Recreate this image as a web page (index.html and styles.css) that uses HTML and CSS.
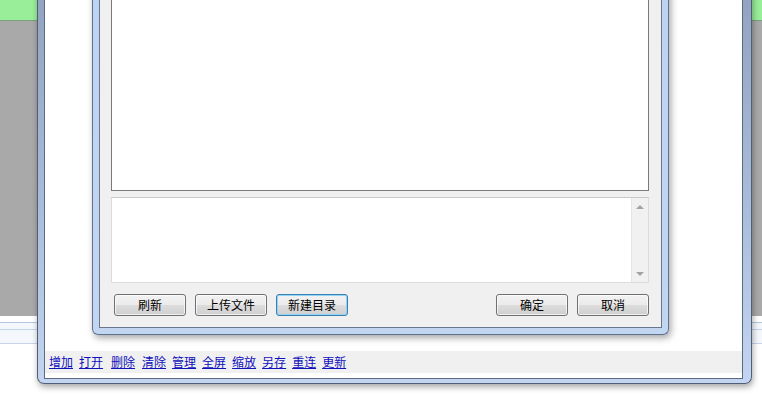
FILE: index.html
```html
<!DOCTYPE html>
<html lang="zh-CN">
<head>
  <meta charset="UTF-8" />
  <meta name="viewport" content="width=device-width, initial-scale=1.0" />
  <title>文件管理</title>
  <link rel="stylesheet" href="styles.css">
</head>
<body>
  <div class="desk">
    <div class="band"></div>
    <div class="shade"></div>
    <div class="strip"><div class="strip-line"></div></div>
  </div>

  <div class="win">
    <div class="win-body">
      <div class="links">
        <a href="#">增加</a>
        <a href="#" class="wide">打开</a>
        <a href="#" class="wide-s">删除</a>
        <a href="#">清除</a>
        <a href="#">管理</a>
        <a href="#">全屏</a>
        <a href="#">缩放</a>
        <a href="#">另存</a>
        <a href="#">重连</a>
        <a href="#">更新</a>
      </div>
    </div>
  </div>

  <div class="dlg">
    <div class="dlg-body">
      <div class="list"></div>
      <div class="memo">
        <div class="memo-text"></div>
        <div class="vbar">
          <span class="arr"><i class="tri up"></i></span>
          <span class="track"></span>
          <span class="arr"><i class="tri down"></i></span>
        </div>
      </div>
      <div class="btns">
        <button class="btn">刷新</button>
        <button class="btn">上传文件</button>
        <button class="btn focus">新建目录</button>
        <span class="fill"></span>
        <button class="btn">确定</button>
        <button class="btn">取消</button>
      </div>
    </div>
  </div>
</body>
</html>
```

FILE: styles.css
```css
html, body {
  margin: 0;
  padding: 0;
  background: white;
  overflow: hidden;
  box-sizing: border-box;
  font-family: "Noto Sans CJK SC", "Liberation Sans", sans-serif;
  font-size: 12px;
}

*,
*::before,
*::after {
  box-sizing: inherit;
}

/* page behind the windows */
.desk {
  height: 405px;
}

.band {
  height: 21px;
  background: #99ef99;
  border-bottom: 1px solid #7d9f7d;
}

.shade {
  height: 295px;
  background: #a9a9a9;
}

.strip {
  margin-top: 6px;
  height: 22px;
  background: #f4f7fc;
  border-top: 1px solid #b3c6e1;
  border-bottom: 1px solid #c6d5ea;
}

.strip-line {
  margin-top: 6px;
  border-top: 1px solid #c2d3ec;
}

/* outer window */
.win {
  position: absolute;
  left: 37px;
  top: -60px;
  width: 715px;
  height: 444px;
  padding: 0 8px 4px 6px;
  border: 1px solid #4f5f78;
  border-top: none;
  border-radius: 0 0 7px 7px;
  background: linear-gradient(#8c9db8, #a9bcd9 60%, #c3d5f0);
  box-shadow: 1px 3px 6px rgba(0, 0, 0, 0.35);
}

.win-body {
  height: 100%;
  background: #fff;
  border: 1px solid #5a6a85;
  border-top: none;
  display: flex;
  flex-direction: column;
  justify-content: flex-end;
  padding-bottom: 5px;
}

.links {
  height: 22px;
  background: #f0f0f0;
  padding-left: 4px;
  display: flex;
  align-items: center;
  gap: 6px;
  line-height: 1;
}

.links a {
  color: #1111bb;
  text-decoration: underline;
}

.links .wide {
  margin-right: 2px;
}

.links .wide-s {
  margin-right: 1px;
}

/* dialog */
.dlg {
  position: absolute;
  left: 92px;
  top: -200px;
  width: 577px;
  height: 535px;
  padding: 0 6px 6px;
  border: 1px solid #5e7190;
  border-top: none;
  border-radius: 0 0 6px 6px;
  background: linear-gradient(#bcd2f3, #c2d6f2);
  box-shadow: 2px 3px 7px rgba(0, 0, 0, 0.35);
}

.dlg-body {
  height: 100%;
  background: #f0f0f0;
  border: 1px solid #66778f;
  border-top: none;
  display: flex;
  flex-direction: column;
  padding: 0 12px 11px 11px;
}

.list {
  flex: 1;
  background: #fff;
  border: 1px solid #7a7a7a;
  border-top: none;
}

.memo {
  margin-top: 6px;
  height: 86px;
  background: #fff;
  border: 1px solid #dcdcdc;
  border-top-color: #c9c9c9;
  display: flex;
}

.memo-text {
  flex: 1;
}

.vbar {
  width: 17px;
  background: #f1f1f1;
  border-left: 1px solid #e4e4e4;
  display: flex;
  flex-direction: column;
}

.arr {
  height: 17px;
  display: flex;
  align-items: center;
  justify-content: center;
}

.track {
  flex: 1;
}

.tri {
  width: 0;
  height: 0;
  border-left: 4px solid transparent;
  border-right: 4px solid transparent;
}

.tri.up {
  border-bottom: 4px solid #a3a3a3;
}

.tri.down {
  border-top: 4px solid #a3a3a3;
}

.btns {
  margin-top: 11px;
  padding-left: 3px;
  display: flex;
  gap: 9px;
}

.fill {
  flex: 1;
}

.btn {
  width: 72px;
  height: 22px;
  margin: 0;
  padding: 0;
  font-family: "Noto Sans CJK SC", "Liberation Sans", sans-serif;
  font-size: 12px;
  line-height: 1;
  color: #000;
  border: 1px solid #707070;
  border-radius: 3px;
  background: linear-gradient(#f2f2f2, #ebebeb 50%, #dddddd 50%, #cfcfcf);
  box-shadow: inset 0 0 0 1px rgba(255, 255, 255, 0.7);
}

.btn.focus {
  border-color: #3c7fb1;
  box-shadow: inset 0 0 0 1px #8fd3f5;
}
```
